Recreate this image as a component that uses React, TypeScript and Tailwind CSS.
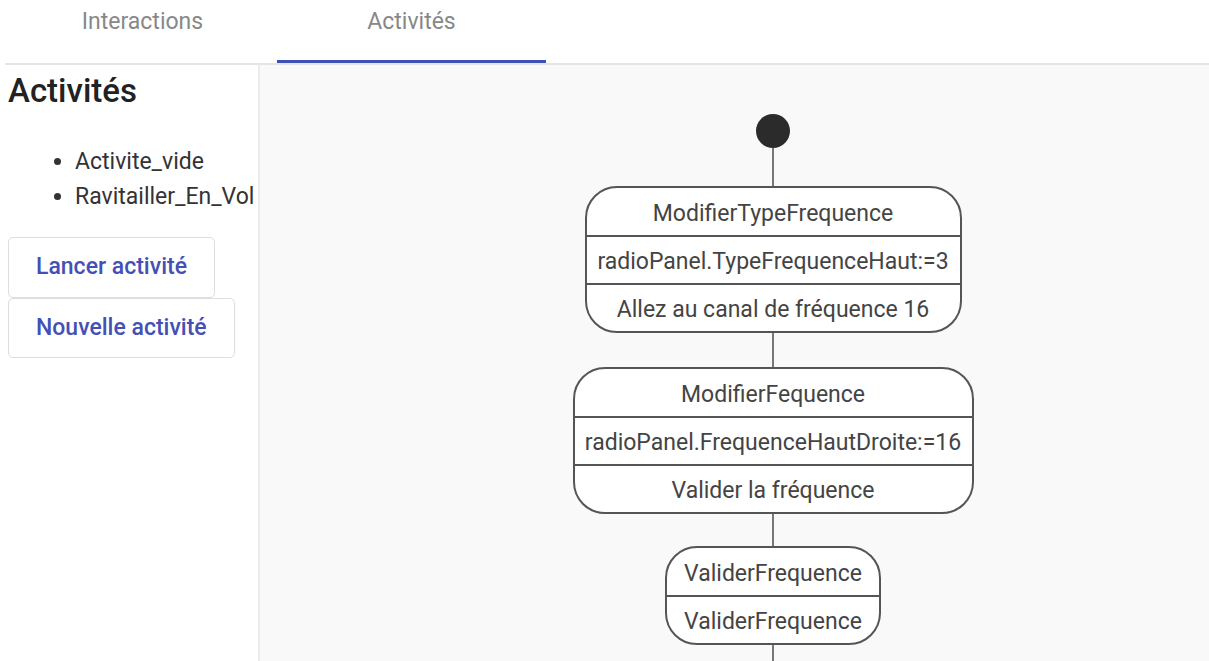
import React from 'react';

const font = { fontFamily: 'Roboto, "Liberation Sans", sans-serif' };

type StateBox = { title: string; rows: string[]; width: string };

const states: StateBox[] = [
  { title: 'ModifierTypeFrequence', rows: ['radioPanel.TypeFrequenceHaut:=3', 'Allez au canal de fréquence 16'], width: 'w-[377px]' },
  { title: 'ModifierFequence', rows: ['radioPanel.FrequenceHautDroite:=16', 'Valider la fréquence'], width: 'w-[401px]' },
  { title: 'ValiderFrequence', rows: ['ValiderFrequence'], width: 'w-[216px]' },
];

const Connector: React.FC<{ h: string }> = ({ h }) => <div className={`w-[2px] bg-[#777] ${h}`} />;

const App: React.FC = () => {
  const tabs = ['Interactions', 'Activités'];
  const active = 1;

  return (
    <div className="w-[1209px] h-[661px] overflow-hidden bg-white flex flex-col" style={font}>
      {/* Tabs */}
      <div className="ml-[5px] h-[65px] flex border-b-2 border-[#e5e5e5] shrink-0">
        <div className="ml-[3px] flex">
          {tabs.map((t, i) => (
            <div
              key={t}
              className={`w-[269px] h-full flex justify-center pt-[5px] text-[23px] text-[#888] ${
                i === active ? 'border-b-[3px] border-[#3f51b5] -mb-[2px]' : ''
              }`}
            >
              {t}
            </div>
          ))}
        </div>
      </div>

      <div className="flex flex-1 min-h-0">
        {/* Sidebar */}
        <div className="w-[260px] shrink-0 border-r-2 border-[#ececec] overflow-hidden pl-[8px]">
          <h2 className="text-[33px] font-medium text-[#222] mt-[6px] leading-[40px]">Activités</h2>
          <ul className="list-disc pl-[67px] mt-[33px] text-[23px] text-[#333] leading-[35px] whitespace-nowrap">
            <li>Activite_vide</li>
            <li>Ravitailler_En_Vol</li>
          </ul>
          <div className="mt-[23px] flex flex-col items-start">
            <button className="h-[61px] px-[27px] border border-[#dedede] rounded-[5px] bg-white text-[23px] font-medium text-[#4450b5]">
              Lancer activité
            </button>
            <button className="h-[60px] px-[27px] border border-[#dedede] rounded-[5px] bg-white text-[23px] font-medium text-[#4450b5]">
              Nouvelle activité
            </button>
          </div>
        </div>

        {/* Diagram */}
        <div className="flex-1 bg-[#f9f9f9] overflow-hidden pl-[77px]">
          <div className="flex flex-col items-center pt-[49px]">
            <div className="w-[34px] h-[34px] rounded-full bg-[#2b2b2b]" />
            <Connector h="h-[38px]" />
            {states.map((s, i) => (
              <React.Fragment key={s.title}>
                <div className={`${s.width} border-2 border-[#555] rounded-[32px] bg-white text-[23px] text-[#444] overflow-hidden`}>
                  <div className="h-[47px] pt-[5px] flex items-center justify-center">{s.title}</div>
                  {s.rows.map(r => (
                    <div key={r} className="h-[48px] pt-[4px] flex items-center justify-center border-t-2 border-[#555] whitespace-nowrap">
                      {r}
                    </div>
                  ))}
                </div>
                <Connector h={i === 0 ? 'h-[34px]' : i === 1 ? 'h-[32px]' : 'h-[30px]'} />
              </React.Fragment>
            ))}
          </div>
        </div>
      </div>
    </div>
  );
};

export default App;
